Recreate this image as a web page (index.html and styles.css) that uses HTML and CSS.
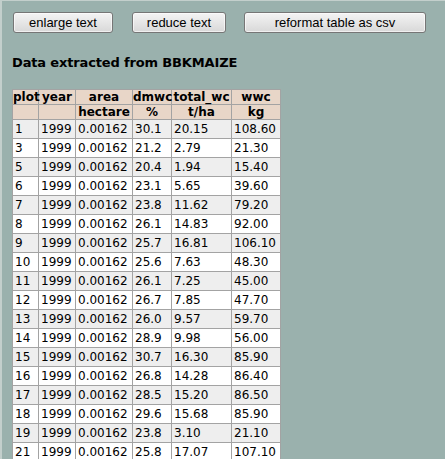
FILE: index.html
```html
<!DOCTYPE html>
<html>
<head>
<meta charset="utf-8">
<link rel="stylesheet" href="styles.css">
</head>
<body>
<div class="frame">
  <div class="toolbar">
    <button class="btn btn-enlarge">enlarge text</button>
    <button class="btn btn-reduce">reduce text</button>
    <button class="btn btn-csv">reformat table as csv</button>
  </div>
  <h1 class="title">Data extracted from BBKMAIZE</h1>
  <table class="data">
    <colgroup>
      <col class="c-plot"><col class="c-year"><col class="c-area"><col class="c-dmwc"><col class="c-total"><col class="c-wwc">
    </colgroup>
    <thead>
      <tr><th>plot</th><th>year</th><th>area</th><th>dmwc</th><th>total_wc</th><th>wwc</th></tr>
      <tr><th></th><th></th><th>hectare</th><th>%</th><th>t/ha</th><th>kg</th></tr>
    </thead>
    <tbody>
      <tr class="odd"><td>1</td><td>1999</td><td>0.00162</td><td>30.1</td><td>20.15</td><td>108.60</td></tr>
      <tr><td>3</td><td>1999</td><td>0.00162</td><td>21.2</td><td>2.79</td><td>21.30</td></tr>
      <tr class="odd"><td>5</td><td>1999</td><td>0.00162</td><td>20.4</td><td>1.94</td><td>15.40</td></tr>
      <tr><td>6</td><td>1999</td><td>0.00162</td><td>23.1</td><td>5.65</td><td>39.60</td></tr>
      <tr class="odd"><td>7</td><td>1999</td><td>0.00162</td><td>23.8</td><td>11.62</td><td>79.20</td></tr>
      <tr><td>8</td><td>1999</td><td>0.00162</td><td>26.1</td><td>14.83</td><td>92.00</td></tr>
      <tr class="odd"><td>9</td><td>1999</td><td>0.00162</td><td>25.7</td><td>16.81</td><td>106.10</td></tr>
      <tr><td>10</td><td>1999</td><td>0.00162</td><td>25.6</td><td>7.63</td><td>48.30</td></tr>
      <tr class="odd"><td>11</td><td>1999</td><td>0.00162</td><td>26.1</td><td>7.25</td><td>45.00</td></tr>
      <tr><td>12</td><td>1999</td><td>0.00162</td><td>26.7</td><td>7.85</td><td>47.70</td></tr>
      <tr class="odd"><td>13</td><td>1999</td><td>0.00162</td><td>26.0</td><td>9.57</td><td>59.70</td></tr>
      <tr><td>14</td><td>1999</td><td>0.00162</td><td>28.9</td><td>9.98</td><td>56.00</td></tr>
      <tr class="odd"><td>15</td><td>1999</td><td>0.00162</td><td>30.7</td><td>16.30</td><td>85.90</td></tr>
      <tr><td>16</td><td>1999</td><td>0.00162</td><td>26.8</td><td>14.28</td><td>86.40</td></tr>
      <tr class="odd"><td>17</td><td>1999</td><td>0.00162</td><td>28.5</td><td>15.20</td><td>86.50</td></tr>
      <tr><td>18</td><td>1999</td><td>0.00162</td><td>29.6</td><td>15.68</td><td>85.90</td></tr>
      <tr class="odd"><td>19</td><td>1999</td><td>0.00162</td><td>23.8</td><td>3.10</td><td>21.10</td></tr>
      <tr><td>21</td><td>1999</td><td>0.00162</td><td>25.8</td><td>17.07</td><td>107.10</td></tr>
    </tbody>
  </table>
</div>
</body>
</html>
```
FILE: styles.css
```css
html, body {
  margin: 0;
  padding: 0;
  background: #9ab1ad;
}
.frame {
  min-height: 459px;
  box-sizing: border-box;
  border-top: 1px solid #c3cfcc;
  border-left: 2px solid #c3cfcc;
  padding: 11px 0 0 11px;
}
.toolbar {
  display: flex;
  gap: 19px;
}
.btn {
  box-sizing: border-box;
  height: 21px;
  padding: 0;
  font-family: "Liberation Sans", Arial, sans-serif;
  font-size: 13px;
  color: #000;
  background: linear-gradient(#f4f4f4, #e6e6e6 50%, #d8d8d8);
  border: 1px solid #767676;
  border-radius: 3px;
  box-shadow: inset 0 0 0 1px rgba(255,255,255,0.6);
}
.btn-enlarge { width: 100px; }
.btn-reduce { width: 94px; }
.btn-csv { width: 182px; margin-left: -1px; }
.title {
  margin: 22px 0 0 -1px;
  font-family: "DejaVu Sans", Verdana, sans-serif;
  font-weight: bold;
  font-size: 13px;
  line-height: 16px;
  letter-spacing: -0.15px;
  color: #000;
}
.data {
  margin: 18px 0 0 -1px;
  border-collapse: collapse;
  table-layout: fixed;
  width: 269px;
  font-family: "DejaVu Sans", Verdana, sans-serif;
  font-size: 12px;
  color: #000;
}
.c-plot { width: 26px; }
.c-year { width: 37px; }
.c-area { width: 57px; }
.c-dmwc { width: 39px; }
.c-total { width: 60px; }
.c-wwc { width: 49px; }
.data th, .data td {
  border: 1px solid #a3a3a3;
  white-space: nowrap;
  overflow: visible;
}
.data th {
  background: #e8d6c8;
  font-weight: bold;
  height: 14px;
  line-height: 14px;
  padding: 0;
  text-align: center;
}
.data td {
  background: #ffffff;
  height: 18px;
  line-height: 18px;
  padding: 0 0 0 2px;
  text-align: left;
}
.data tr.odd td {
  background: #eeeeee;
}
```
